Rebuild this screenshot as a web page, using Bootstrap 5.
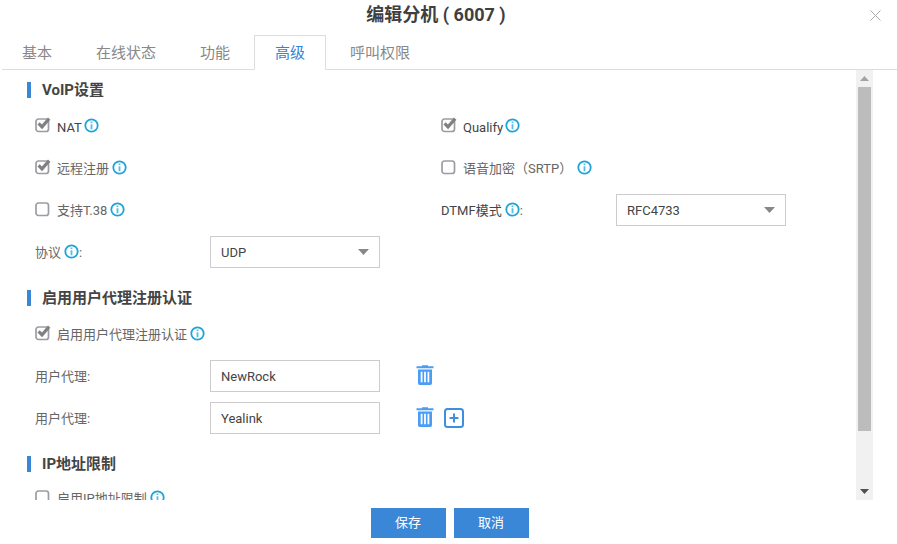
<!DOCTYPE html>
<html lang="zh-CN">
<head>
<meta charset="utf-8">
<title>编辑分机</title>
<link href="https://cdn.jsdelivr.net/npm/bootstrap@5.3.0/dist/css/bootstrap.min.css" rel="stylesheet">
<style>
html,body{height:544px;overflow:hidden;background:#fff}
body{font-family:Roboto,"Noto Sans CJK SC",sans-serif;font-size:13px;color:#444}
.dlg{width:897px;height:544px;display:flex;flex-direction:column}
.dlg-head{height:35px;position:relative;text-align:center;flex:none;padding-right:25px}
.dlg-title{font-size:18px;font-weight:700;line-height:30px;margin:0;color:#3f3f3f}
.dlg-close{position:absolute;left:870px;top:10px;width:11px;height:11px;display:block;padding:0;border:0;background:none;line-height:0}
.tabs-wrap{margin-left:2px;height:35px;flex:none;border-bottom:1px solid #ddd;gap:2px;flex-wrap:nowrap}
.tabs-wrap .nav-item:first-child{margin-left:-1px}
.tabs-wrap .nav-link{font-size:15px;line-height:18px;padding:8px 20px;color:#888;border:1px solid transparent;border-radius:0;margin-bottom:-1px;height:35px}
.tabs-wrap .nav-link.active{color:#2f86d8;border-color:#ddd #ddd #fff;background:#fff;margin:0 1px -1px}
.body-area{height:430px;flex:none;display:flex;overflow:hidden}
.pane{width:856px;flex:none;overflow:hidden;padding-top:12px;padding-left:27px}
.sec-head{height:16px;border-left:4px solid #3a87d8;padding-left:11px;font-size:15px;font-weight:700;line-height:16px;color:#444;margin:0}
.sec-gap{margin-top:17px}
.sec-first{margin-bottom:7px}
.sec-mid{margin-bottom:7px}
.sec-last{margin-bottom:5px}
.fld-row{width:812px;margin-left:8px;height:42px;--bs-gutter-x:0}
.fld{height:42px;display:flex;align-items:center}
.lbl{width:175px;flex:none;display:flex;align-items:center;color:#555}
.txt{position:relative;top:1px;color:#666}
.txt-dark{color:#444;top:2px}
.lbl-dark{color:#444}
.chk{appearance:none;-webkit-appearance:none;width:17px;height:16px;margin:0 5px 0 0;flex:none;background:no-repeat 0 0/17px 16px;position:relative;top:-1px;display:block}
.chk{background-image:url("data:image/svg+xml,%3Csvg xmlns='http://www.w3.org/2000/svg' width='17' height='16'%3E%3Crect x='1' y='2' width='12.500' height='12.500' rx='2.500' fill='%23fff' stroke='%239c9ca4' stroke-width='1.700'/%3E%3C/svg%3E")}
.chk:checked{background-image:url("data:image/svg+xml,%3Csvg xmlns='http://www.w3.org/2000/svg' width='17' height='16'%3E%3Crect x='1' y='2' width='12.500' height='12.500' rx='2.500' fill='%23fff' stroke='%239c9ca4' stroke-width='1.700'/%3E%3Cpath d='M3.600 6.400l3.400 3.400 7.200-8.200' fill='none' stroke='%23808080' stroke-width='3.200'/%3E%3C/svg%3E")}
.ico{width:15px;height:15px;flex:none;display:block;position:relative;top:-1px;margin-left:3px}
.ico-far{margin-left:5px}
.ico-near{margin-left:2px}
.box-input,.box-select{width:170px;height:32px;border:1px solid #ccc;border-radius:0;font-size:13px;padding:0 10px;color:#444;box-shadow:none;font-family:inherit;line-height:30px}
.box-select{padding:1px 24px 0 10px;background-image:url("data:image/svg+xml,%3Csvg xmlns='http://www.w3.org/2000/svg' width='11' height='6'%3E%3Cpath d='M0 0h11L5.500 6z' fill='%23888'/%3E%3C/svg%3E");background-position:right 10px center;background-size:11px 6px}
.act-ico{flex:none;display:block}
.act-first{margin-left:36px;margin-bottom:3px}
.act-next{margin-left:10px}
.sbar{width:17px;margin-left:0;background:#f1f1f1;flex:none;display:flex;flex-direction:column;align-items:center}
.sb-up,.sb-down{height:17px;flex:none;display:flex;align-items:center;justify-content:center}
.sb-thumb{width:13px;height:344px;background:#bcbcbc;flex:none}
.sb-rest{flex:1}
.dlg-foot{flex:1;display:flex;justify-content:center;align-items:flex-start;padding-top:8px;gap:8px;padding-left:2px}
.foot-btn{width:75px;height:30px;background:#3a87d8;color:#fff;border:0;border-radius:0;font-size:13px;padding:0;line-height:30px}
.foot-btn:hover{background:#3a87d8;color:#fff}
</style>
</head>
<body>
<svg width="0" height="0" class="d-none">
<symbol id="i-info" viewBox="0 0 15 15"><circle cx="7.500" cy="7.500" r="6.200" fill="#fff" stroke="#1fa3d8" stroke-width="1.800"/><path d="M7.500 3.600v1.500M7.500 6.200v5" stroke="#58bbe2" stroke-width="1.800" fill="none"/></symbol>
<symbol id="i-trash" viewBox="0 0 18 21"><path d="M6 2.300V1.200h6v1.100h5.500v1.900H.5V2.300z" fill="#4a9df5"/><path d="M2 5.400h14v13.800a1.700 1.700 0 0 1-1.700 1.700H3.700A1.700 1.700 0 0 1 2 19.200zM4.700 7.800v10.500h1.800V7.800zM8.100 7.800v10.500h1.800V7.800zM11.500 7.800v10.500h1.800V7.800z" fill="#4a9df5" fill-rule="evenodd"/></symbol>
<symbol id="i-plus" viewBox="0 0 20 20"><rect x="1" y="1" width="18" height="18" rx="2.500" fill="none" stroke="#3f8fe0" stroke-width="2"/><path d="M10 5.600v8.800M5.600 10h8.800" stroke="#3f8fe0" stroke-width="2" fill="none"/></symbol>
</svg>
<div class="dlg">
  <div class="dlg-head">
    <h1 class="dlg-title">编辑分机 ( 6007 )</h1>
    <button type="button" class="dlg-close" aria-label="关闭"><svg width="11" height="11" viewBox="0 0 11 11"><path d="M.5.500l10 10M10.500.500l-10 10" stroke="#aaa" stroke-width="1" fill="none"/></svg></button>
  </div>
  <ul class="nav tabs-wrap">
    <li class="nav-item"><a class="nav-link" href="#">基本</a></li>
    <li class="nav-item"><a class="nav-link" href="#">在线状态</a></li>
    <li class="nav-item"><a class="nav-link" href="#">功能</a></li>
    <li class="nav-item"><a class="nav-link active" href="#">高级</a></li>
    <li class="nav-item"><a class="nav-link" href="#">呼叫权限</a></li>
  </ul>
  <div class="body-area">
    <div class="pane">
      <h2 class="sec-head sec-first">VoIP设置</h2>
      <div class="row fld-row">
        <div class="col-6 fld"><input class="chk" type="checkbox" checked><span class="txt txt-dark">NAT</span><svg class="ico ico-near"><use href="#i-info"/></svg></div>
        <div class="col-6 fld"><input class="chk" type="checkbox" checked><span class="txt txt-dark">Qualify</span><svg class="ico ico-near"><use href="#i-info"/></svg></div>
      </div>
      <div class="row fld-row">
        <div class="col-6 fld"><input class="chk" type="checkbox" checked><span class="txt">远程注册</span><svg class="ico"><use href="#i-info"/></svg></div>
        <div class="col-6 fld"><input class="chk" type="checkbox"><span class="txt">语音加密（SRTP）</span><svg class="ico ico-far"><use href="#i-info"/></svg></div>
      </div>
      <div class="row fld-row">
        <div class="col-6 fld"><input class="chk" type="checkbox"><span class="txt">支持T.38</span><svg class="ico"><use href="#i-info"/></svg></div>
        <div class="col-6 fld"><label class="lbl"><span class="txt lbl-dark">DTMF模式</span><svg class="ico"><use href="#i-info"/></svg><span class="txt">:</span></label><select class="form-select box-select"><option>RFC4733</option></select></div>
      </div>
      <div class="row fld-row">
        <div class="col-6 fld"><label class="lbl"><span class="txt">协议</span><svg class="ico"><use href="#i-info"/></svg><span class="txt">:</span></label><select class="form-select box-select"><option>UDP</option></select></div>
      </div>
      <h2 class="sec-head sec-gap sec-mid">启用用户代理注册认证</h2>
      <div class="row fld-row">
        <div class="col-12 fld"><input class="chk" type="checkbox" checked><span class="txt">启用用户代理注册认证</span><svg class="ico"><use href="#i-info"/></svg></div>
      </div>
      <div class="row fld-row">
        <div class="col-12 fld"><label class="lbl"><span class="txt">用户代理:</span></label><input class="form-control box-input" type="text" value="NewRock"><svg class="act-ico act-first" width="18" height="21"><use href="#i-trash"/></svg></div>
      </div>
      <div class="row fld-row">
        <div class="col-12 fld"><label class="lbl"><span class="txt">用户代理:</span></label><input class="form-control box-input" type="text" value="Yealink"><svg class="act-ico act-first" width="18" height="21"><use href="#i-trash"/></svg><svg class="act-ico act-next" width="20" height="20"><use href="#i-plus"/></svg></div>
      </div>
      <h2 class="sec-head sec-gap sec-last">IP地址限制</h2>
      <div class="row fld-row">
        <div class="col-12 fld"><input class="chk" type="checkbox"><span class="txt">启用IP地址限制</span><svg class="ico"><use href="#i-info"/></svg></div>
      </div>
    </div>
    <div class="sbar">
      <div class="sb-up"><svg width="9" height="5"><path d="M0 5h9L4.500 0z" fill="#a3a3a3"/></svg></div>
      <div class="sb-thumb"></div>
      <div class="sb-rest"></div>
      <div class="sb-down"><svg width="9" height="5"><path d="M0 0h9L4.500 5z" fill="#505050"/></svg></div>
    </div>
  </div>
  <div class="dlg-foot">
    <button type="button" class="btn foot-btn">保存</button>
    <button type="button" class="btn foot-btn">取消</button>
  </div>
</div>
<script src="https://cdn.jsdelivr.net/npm/bootstrap@5.3.0/dist/js/bootstrap.bundle.min.js"></script>
</body>
</html>
